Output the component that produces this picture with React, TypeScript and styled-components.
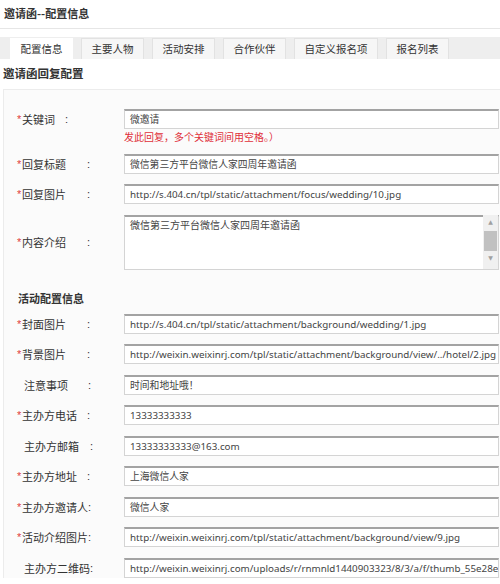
import styled, { createGlobalStyle } from 'styled-components';

const GlobalStyle = createGlobalStyle`
  html, body {
    margin: 0;
    padding: 0;
    background: #fff;
  }
  body {
    font-family: "Noto Sans", "Noto Sans CJK SC", sans-serif;
    color: #333;
  }
`;

const tabs = ['配置信息', '主要人物', '活动安排', '合作伙伴', '自定义报名项', '报名列表'];

type Field = {
    star: boolean;
    name: string;
    gap: number;
    value: string;
};

const replyFields: Field[] = [
    { star: true, name: '回复标题', gap: 21, value: '微信第三方平台微信人家四周年邀请函' },
    { star: true, name: '回复图片', gap: 21, value: 'http://s.404.cn/tpl/static/attachment/focus/wedding/10.jpg' },
];

const activityFields: Field[] = [
    { star: true, name: '封面图片', gap: 21, value: 'http://s.404.cn/tpl/static/attachment/background/wedding/1.jpg' },
    { star: true, name: '背景图片', gap: 21, value: 'http://weixin.weixinrj.com/tpl/static/attachment/background/view/../hotel/2.jpg' },
    { star: false, name: '注意事项', gap: 20, value: '时间和地址哦！' },
    { star: true, name: '主办方电话', gap: 10, value: '13333333333' },
    { star: false, name: '主办方邮箱', gap: 11, value: '13333333333@163.com' },
    { star: true, name: '主办方地址', gap: 10, value: '上海微信人家' },
    { star: true, name: '主办方邀请人', gap: 0, value: '微信人家' },
    { star: true, name: '活动介绍图片', gap: 0, value: 'http://weixin.weixinrj.com/tpl/static/attachment/background/view/9.jpg' },
    { star: false, name: '主办方二维码', gap: 0, value: 'http://weixin.weixinrj.com/uploads/r/rnmnld1440903323/8/3/a/f/thumb_55e28e0d3c6a2.jpg' },
];

const FieldLabel: React.FC<{ star: boolean; name: string; gap: number }> = ({ star, name, gap }) => (
    <Label>
        {star ? <Star>*</Star> : <Indent />}
        {name}
        <Colon $gap={gap}>:</Colon>
    </Label>
);

const FieldRow: React.FC<{ field: Field }> = ({ field }) => (
    <Row>
        <FieldLabel star={field.star} name={field.name} gap={field.gap} />
        <Input>{field.value}</Input>
    </Row>
);

const App: React.FC = () => {
    return (
        <Page>
            <GlobalStyle />
            <Title>邀请函--配置信息</Title>
            <TabBar>
                {tabs.map((t, i) => (
                    <Tab key={t} $active={i === 0}>{t}</Tab>
                ))}
            </TabBar>
            <SectionTitle>邀请函回复配置</SectionTitle>
            <Panel>
                <Row>
                    <FieldLabel star name="关键词" gap={10} />
                    <InputCol>
                        <Input>微邀请</Input>
                        <Hint>发此回复，多个关键词间用空格。）</Hint>
                    </InputCol>
                </Row>
                {replyFields.map(f => <FieldRow key={f.name} field={f} />)}
                <Row $tall>
                    <FieldLabel star name="内容介绍" gap={21} />
                    <TextArea>
                        <TextBody>微信第三方平台微信人家四周年邀请函</TextBody>
                        <ScrollBar>
                            <Arrow>▲</Arrow>
                            <Thumb />
                            <Arrow>▼</Arrow>
                        </ScrollBar>
                    </TextArea>
                </Row>
                <SubTitle>活动配置信息</SubTitle>
                {activityFields.map(f => <FieldRow key={f.name} field={f} />)}
            </Panel>
        </Page>
    );
}

const Page = styled.div`
    width: 500px;
    height: 584px;
    overflow: hidden;
    font-family: "Noto Sans", "Noto Sans CJK SC", sans-serif;
`;

const Title = styled.div`
    height: 28px;
    line-height: 26px;
    padding-left: 4px;
    font-size: 11px;
    font-weight: bold;
    color: #333;
    border-bottom: 1px solid #e6e6e6;
    font-family: "Noto Sans CJK SC", sans-serif;
`;

const TabBar = styled.div`
    margin-top: 8px;
    height: 22px;
    display: flex;
    align-items: flex-end;
    gap: 8px;
    padding-left: 10px;
    background: #eeeeee;
`;

const Tab = styled.div<{ $active?: boolean }>`
    height: 20px;
    line-height: 20px;
    padding: 0 9.5px;
    white-space: nowrap;
    text-align: center;
    font-size: 10.5px;
    color: #333;
    font-family: "Noto Sans CJK SC", sans-serif;
    background: ${p => (p.$active ? '#fff' : '#f6f6f6')};
    border: 1px solid ${p => (p.$active ? '#fff' : '#e2e2e2')};
    border-bottom: none;
`;

const SectionTitle = styled.div`
    height: 30px;
    line-height: 29px;
    padding-left: 3px;
    font-size: 11.5px;
    font-weight: bold;
    color: #333;
    font-family: "Noto Sans CJK SC", sans-serif;
`;

const Panel = styled.div`
    margin-left: 3px;
    padding: 19px 0 0 14px;
    background: #fbfbfb;
    border-top: 1px solid #ececec;
    border-left: 1px solid #ececec;
    display: flex;
    flex-direction: column;
    gap: 10.5px;
`;

const Row = styled.div<{ $tall?: boolean }>`
    display: flex;
    align-items: ${p => (p.$tall ? 'center' : 'flex-start')};
`;

const Label = styled.div`
    width: 106px;
    flex: none;
    height: 20px;
    line-height: 20px;
    font-size: 11px;
    color: #333;
    font-family: "Noto Sans CJK SC", sans-serif;
    display: flex;
    white-space: pre;
`;

const Star = styled.span`
    color: #e03b3b;
    width: 4px;
    margin-left: -1px;
    margin-right: 1px;
    font-family: "Liberation Sans", sans-serif;
`;

const Indent = styled.span`
    width: 6px;
`;

const Colon = styled.span<{ $gap: number }>`
    margin-left: ${p => p.$gap}px;
    font-family: "Liberation Sans", sans-serif;
`;

const InputCol = styled.div`
    display: flex;
    flex-direction: column;
`;

const Input = styled.div`
    box-sizing: border-box;
    width: 375px;
    height: 20px;
    line-height: 18px;
    padding: 0 5px;
    font-size: 9.8px;
    color: #444;
    background: #fff;
    border: 1px solid #d4d4d4;
    border-top: 2px solid #a3a3a3;
    white-space: nowrap;
    overflow: hidden;
    font-family: "Noto Sans", "Noto Sans CJK SC", sans-serif;
`;

const Hint = styled.div`
    height: 14px;
    line-height: 16px;
    font-size: 10px;
    color: #e0303a;
    white-space: nowrap;
    font-family: "Noto Sans CJK SC", sans-serif;
`;

const TextArea = styled.div`
    box-sizing: border-box;
    width: 375px;
    height: 55px;
    display: flex;
    background: #fff;
    border: 1px solid #d4d4d4;
    border-top: 2px solid #a3a3a3;
`;

const TextBody = styled.div`
    flex: 1;
    padding: 0 5px;
    line-height: 16px;
    font-size: 10px;
    color: #444;
    font-family: "Noto Sans CJK SC", sans-serif;
`;

const ScrollBar = styled.div`
    width: 15px;
    margin-top: -2px;
    background: #f0f0f0;
    display: flex;
    flex-direction: column;
    align-items: center;
`;

const Arrow = styled.div`
    height: 14px;
    line-height: 14px;
    font-size: 6px;
    color: #a0a0a0;
    font-family: "DejaVu Sans", sans-serif;
`;

const Thumb = styled.div`
    width: 13px;
    height: 20px;
    margin-top: 2px;
    background: #c1c1c1;
    flex: none;
`;

const SubTitle = styled.div`
    height: 15px;
    line-height: 21px;
    margin-top: 8px;
    font-size: 11px;
    font-weight: bold;
    color: #333;
    font-family: "Noto Sans CJK SC", sans-serif;
`;

export default App;
